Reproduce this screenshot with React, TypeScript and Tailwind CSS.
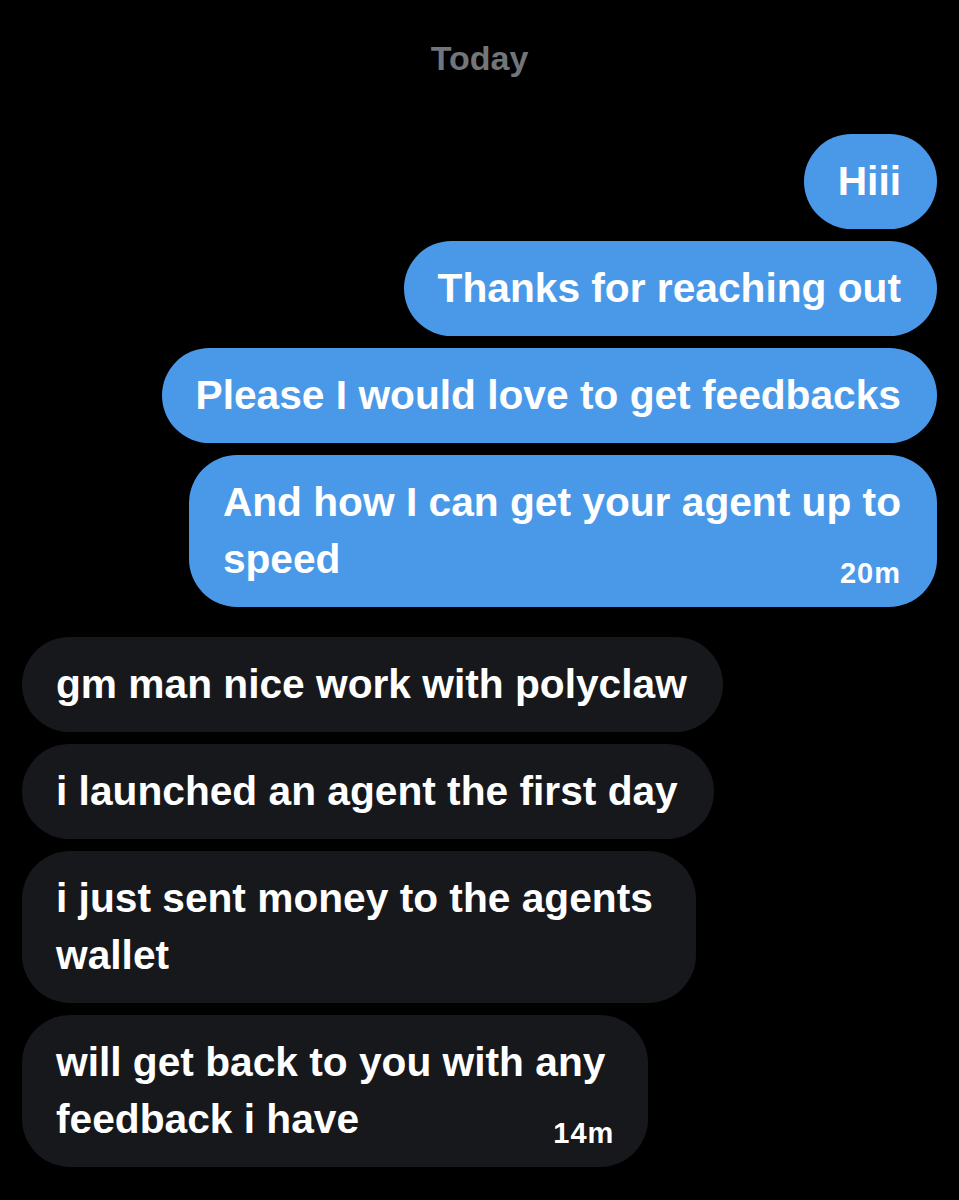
import React from "react";

type Msg = { lines: string[]; time?: string };

const sent: Msg[] = [
  { lines: ["Hiii"] },
  { lines: ["Thanks for reaching out"] },
  { lines: ["Please I would love to get feedbacks"] },
  { lines: ["And how I can get your agent up to", "speed"], time: "20m" },
];

const received: Msg[] = [
  { lines: ["gm man nice work with polyclaw"] },
  { lines: ["i launched an agent the first day"] },
  { lines: ["i just sent money to the agents", "wallet"] },
  { lines: ["will get back to you with any", "feedback i have"], time: "14m" },
];

function Bubble({ msg, mine }: { msg: Msg; mine: boolean }) {
  const multi = msg.lines.length > 1;
  return (
    <div
      className={`relative rounded-[48px] py-[19px] pl-[34px] text-[40.7px] leading-[57px] text-white whitespace-nowrap ${
        mine ? "bg-[#4a99e9]" : "bg-[#16181c]"
      } ${multi && !mine ? "pr-[43px]" : "pr-[36px]"}`}
    >
      {msg.lines.map((l, i) => (
        <React.Fragment key={i}>
          {i > 0 && <br />}
          {l}
        </React.Fragment>
      ))}
      {msg.time && (
        <span
          className={`absolute bottom-[20px] text-[29px] leading-[28px] tracking-[1px] ${
            mine ? "right-[36px]" : "right-[34px]"
          }`}
        >
          {msg.time}
        </span>
      )}
    </div>
  );
}

export default function App() {
  return (
    <div className="min-h-[1200px] w-full bg-black font-['Liberation_Sans',Arial,sans-serif] font-bold">
      <div className="pt-[38px] text-center text-[34px] leading-[40px] text-[#71767b]">
        Today
      </div>
      <div className="mt-[56px] flex flex-col items-end gap-[12px] pr-[22px]">
        {sent.map((m, i) => (
          <Bubble key={i} msg={m} mine />
        ))}
      </div>
      <div className="mt-[30px] flex flex-col items-start gap-[12px] pl-[22px]">
        {received.map((m, i) => (
          <Bubble key={i} msg={m} mine={false} />
        ))}
      </div>
    </div>
  );
}
